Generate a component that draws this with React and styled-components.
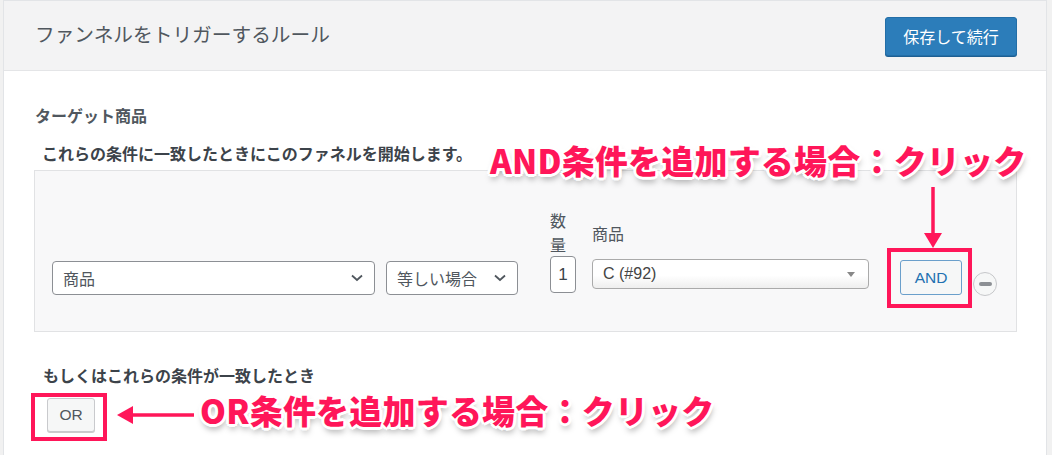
import React from 'react';
import styled, { createGlobalStyle } from 'styled-components';

const pink = '#ff1659';
const jp = '"Noto Sans CJK JP", sans-serif';
const ui = '"Liberation Sans", "Noto Sans CJK JP", sans-serif';

const GlobalStyle = createGlobalStyle`
    html, body {
        margin: 0;
        padding: 0;
        background: #f1f1f1;
    }
    body {
        font-family: ${ui};
        color: #3c434a;
    }
`;

const Page = styled.div`
    position: relative;
    height: 455px;
    overflow: hidden;
    padding: 0 5px 0 3px;
    background: #f1f1f1;
`;

const Panel = styled.div`
    background: #fff;
    border: 1px solid #e2e4e7;
    border-bottom: none;
    height: 100%;
`;

const Header = styled.div`
    display: flex;
    justify-content: space-between;
    align-items: center;
    height: 69px;
    padding: 0 29px 0 31px;
    background: #f3f3f4;
    border-bottom: 1px solid #e4e5e7;
`;

const Title = styled.h2`
    margin: 0 0 5px;
    font-family: ${jp};
    font-size: 19.7px;
    font-weight: 400;
    color: #50575e;
`;

const PrimaryBtn = styled.button`
    width: 132px;
    height: 39px;
    margin-top: 1px;
    border: 1px solid #236ea7;
    border-radius: 3px;
    background: #2c7dba;
    color: #fff;
    font-family: ${jp};
    font-size: 16px;
    box-shadow: 0 1px 0 #1d5f93;
`;

const Body = styled.div`
    padding: 32px 29px 0 30px;
`;

const SectionTitle = styled.div`
    margin-left: ${(p) => p.$indent || 1}px;
    margin-top: ${(p) => p.$top || 0}px;
    font-family: ${jp};
    font-size: 16px;
    line-height: 24px;
    font-weight: 700;
    color: ${(p) => (p.$dark ? '#3c434a' : '#50575e')};
`;

const RuleBox = styled.div`
    margin-top: 5px;
    padding: 37px 16px 36px 17px;
    background: #f8f8f9;
    border: 1px solid #e1e2e4;
`;

const RuleRow = styled.div`
    display: flex;
    align-items: flex-end;
`;

const Field = styled.div`
    display: flex;
    flex-direction: column;
    width: ${(p) => p.$w}px;
    margin-left: ${(p) => p.$ml || 0}px;
    margin-bottom: ${(p) => p.$mb || 0}px;
    flex-shrink: 0;
`;

const Label = styled.div`
    font-family: ${jp};
    font-size: 16px;
    line-height: 24px;
    color: #50575e;
    margin-bottom: ${(p) => p.$gap || 0}px;
`;

const Select = styled.div`
    display: flex;
    align-items: center;
    justify-content: space-between;
    box-sizing: border-box;
    width: ${(p) => p.$w}px;
    height: 34px;
    margin-left: ${(p) => p.$ml || 0}px;
    padding: 0 11px 0 10px;
    background: #fff;
    border: 1px solid #8c8f94;
    border-radius: 4px;
    font-family: ${jp};
    font-size: 16px;
    color: #50575e;
    flex-shrink: 0;
`;

const QtyInput = styled.div`
    box-sizing: border-box;
    height: 37px;
    border: 1px solid #8c8f94;
    border-radius: 4px;
    background: #fff;
    display: flex;
    align-items: center;
    justify-content: center;
    font-family: ${ui};
    font-size: 17px;
    color: #3c434a;
`;

const ComboBox = styled.div`
    display: flex;
    align-items: center;
    justify-content: space-between;
    box-sizing: border-box;
    height: 30px;
    padding: 0 13px 0 10px;
    border: 1px solid #aaa;
    border-radius: 4px;
    background: linear-gradient(#fff 0%, #fff 55%, #eeeeee 100%);
    font-family: ${ui};
    font-size: 16px;
    color: #444;
`;

const Caret = styled.span`
    width: 0;
    height: 0;
    border-left: 4px solid transparent;
    border-right: 4px solid transparent;
    border-top: 5px solid #888;
    margin-top: 1px;
`;

const Marked = styled.div`
    position: relative;
    flex-shrink: 0;
    margin-left: ${(p) => p.$ml || 0}px;
    &::after {
        content: '';
        position: absolute;
        top: ${(p) => -p.$t}px;
        right: ${(p) => -p.$r}px;
        bottom: ${(p) => -p.$b}px;
        left: ${(p) => -p.$l}px;
        border: 4px solid ${pink};
        pointer-events: none;
    }
`;

const LogicBtn = styled.button`
    display: block;
    box-sizing: border-box;
    width: ${(p) => p.$w}px;
    height: ${(p) => p.$h}px;
    border: 1px solid ${(p) => (p.$blue ? '#6a9fcb' : '#c9cacd')};
    border-radius: 3px;
    background: #f6f7f7;
    color: ${(p) => (p.$blue ? '#2271b1' : '#50575e')};
    font-family: ${ui};
    font-size: 15.5px;
    padding: 0;
    box-shadow: ${(p) => (p.$blue ? 'none' : '0 1px 0 #ccc')};
`;

const RemoveBtn = styled.span`
    display: flex;
    align-items: center;
    justify-content: center;
    box-sizing: border-box;
    width: 24px;
    height: 24px;
    margin-left: 11px;
    margin-bottom: -1px;
    border: 1px solid #c6c7ca;
    border-radius: 50%;
    background: #f6f7f7;
    flex-shrink: 0;
    &::before {
        content: '';
        width: 13px;
        height: 4px;
        border-radius: 2px;
        background: #8c8f94;
    }
`;

const OrWrap = styled.div`
    display: flex;
    margin: 11px 0 0 13px;
`;

const Note = styled.div`
    position: absolute;
    left: ${(p) => p.$x}px;
    top: ${(p) => p.$y}px;
    font-family: ${jp};
    font-size: 33px;
    font-weight: 900;
    line-height: 1;
    letter-spacing: 0.2px;
    white-space: nowrap;
    color: ${pink};
    text-shadow:
        2px 0 0 #fff, -2px 0 0 #fff, 0 2px 0 #fff, 0 -2px 0 #fff,
        2px 2px 0 #fff, -2px -2px 0 #fff, 2px -2px 0 #fff, -2px 2px 0 #fff,
        3px 0 0 #fff, -3px 0 0 #fff, 0 3px 0 #fff, 0 -3px 0 #fff,
        1px 5px 6px rgba(0, 0, 0, 0.35);
`;

const ArrowSvg = styled.svg`
    position: absolute;
    left: ${(p) => p.$x}px;
    top: ${(p) => p.$y}px;
    overflow: visible;
`;

function Chevron() {
    return (
        <svg width='12' height='8' viewBox='0 0 12 8'>
            <path d='M1 1.5 L6 6 L11 1.5' fill='none' stroke='#50575e' strokeWidth='1.8' />
        </svg>
    );
}

function App() {
    return (
        <>
            <GlobalStyle />
            <Page>
                <Panel>
                    <Header>
                        <Title>ファンネルをトリガーするルール</Title>
                        <PrimaryBtn type='button'>保存して続行</PrimaryBtn>
                    </Header>
                    <Body>
                        <SectionTitle>ターゲット商品</SectionTitle>
                        <SectionTitle $indent={8} $top={14} $dark>
                            これらの条件に一致したときにこのファネルを開始します。
                        </SectionTitle>
                        <RuleBox>
                            <RuleRow>
                                <Select $w={323}>
                                    商品
                                    <Chevron />
                                </Select>
                                <Select $w={132} $ml={11}>
                                    等しい場合
                                    <Chevron />
                                </Select>
                                <Field $w={26} $ml={32} $mb={2}>
                                    <Label>数量</Label>
                                    <QtyInput>1</QtyInput>
                                </Field>
                                <Field $w={277} $ml={16} $mb={6}>
                                    <Label $gap={14}>商品</Label>
                                    <ComboBox>
                                        C (#92)
                                        <Caret />
                                    </ComboBox>
                                </Field>
                                <Marked $ml={31} $t={12} $r={10} $b={13} $l={13}>
                                    <LogicBtn type='button' $w={62} $h={35} $blue>
                                        AND
                                    </LogicBtn>
                                </Marked>
                                <RemoveBtn />
                            </RuleRow>
                        </RuleBox>
                        <SectionTitle $indent={9} $top={31} $dark>
                            もしくはこれらの条件が一致したとき
                        </SectionTitle>
                        <OrWrap>
                            <Marked $t={5} $r={12} $b={9} $l={16}>
                                <LogicBtn type='button' $w={48} $h={34}>
                                    OR
                                </LogicBtn>
                            </Marked>
                        </OrWrap>
                    </Body>
                </Panel>

                <Note $x={490} $y={144}>AND条件を追加する場合：クリック</Note>
                <Note $x={200} $y={394}>OR条件を追加する場合：クリック</Note>

                <ArrowSvg $x={924} $y={187} width='18' height='62' viewBox='0 0 18 62'>
                    <line x1='9' y1='0' x2='9' y2='48' stroke={pink} strokeWidth='3.5' />
                    <polygon points='0,46 18,46 9,61' fill={pink} />
                </ArrowSvg>
                <ArrowSvg $x={117} $y={406} width='77' height='18' viewBox='0 0 77 18'>
                    <line x1='13' y1='9' x2='77' y2='9' stroke={pink} strokeWidth='3.5' />
                    <polygon points='0,9 16,0 16,18' fill={pink} />
                </ArrowSvg>
            </Page>
        </>
    );
}

export default App;
